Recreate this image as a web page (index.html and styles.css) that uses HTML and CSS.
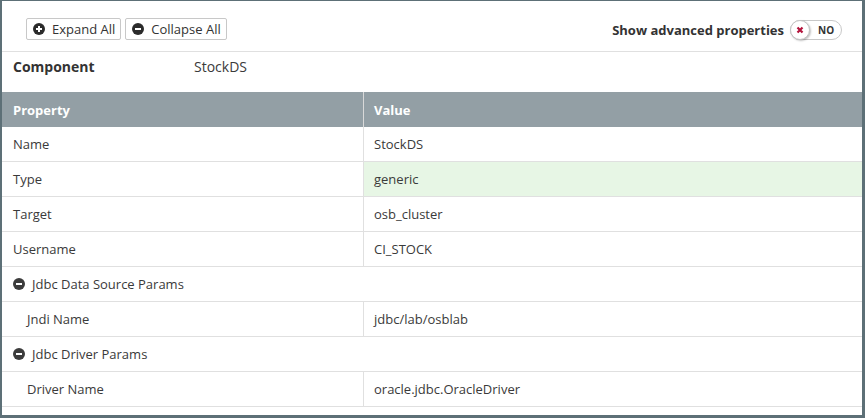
FILE: index.html
```html
<!DOCTYPE html>
<html>
<head>
<meta charset="utf-8">
<link rel="stylesheet" href="styles.css">
</head>
<body>
<div class="frame">
  <div class="toolbar">
    <div class="btns">
      <button class="btn"><svg class="ic" viewBox="0 0 12 12"><circle cx="6" cy="6" r="6" fill="#2b2b2b"/><path d="M6 3v6M3 6h6" stroke="#fff" stroke-width="2"/></svg>Expand All</button>
      <button class="btn"><svg class="ic" viewBox="0 0 12 12"><circle cx="6" cy="6" r="6" fill="#2b2b2b"/><path d="M3 6h6" stroke="#fff" stroke-width="2"/></svg>Collapse All</button>
    </div>
    <div class="adv">
      <span class="adv-label">Show advanced properties</span>
      <span class="toggle"><span class="knob"><svg viewBox="0 0 8 8" class="x"><path d="M1.5 1.5l5 5M6.5 1.5l-5 5" stroke="#b3133b" stroke-width="2.2"/></svg></span><span class="no">NO</span></span>
    </div>
  </div>
  <div class="component">
    <span class="comp-label">Component</span>
    <span class="comp-value">StockDS</span>
  </div>
  <table class="props">
    <thead>
      <tr><th class="c1">Property</th><th class="c2">Value</th></tr>
    </thead>
    <tbody>
      <tr><td class="c1">Name</td><td class="c2">StockDS</td></tr>
      <tr><td class="c1">Type</td><td class="c2 changed">generic</td></tr>
      <tr><td class="c1">Target</td><td class="c2">osb_cluster</td></tr>
      <tr><td class="c1">Username</td><td class="c2">CI_STOCK</td></tr>
      <tr class="group"><td colspan="2"><svg class="gic" viewBox="0 0 12 12"><circle cx="6" cy="6" r="6" fill="#3c3c3c"/><path d="M3 6h6" stroke="#fff" stroke-width="2"/></svg>Jdbc Data Source Params</td></tr>
      <tr><td class="c1 nested">Jndi Name</td><td class="c2">jdbc/lab/osblab</td></tr>
      <tr class="group"><td colspan="2"><svg class="gic" viewBox="0 0 12 12"><circle cx="6" cy="6" r="6" fill="#3c3c3c"/><path d="M3 6h6" stroke="#fff" stroke-width="2"/></svg>Jdbc Driver Params</td></tr>
      <tr><td class="c1 nested">Driver Name</td><td class="c2">oracle.jdbc.OracleDriver</td></tr>
    </tbody>
  </table>
</div>
</body>
</html>
```

FILE: styles.css
```css
html, body {
  margin: 0;
  padding: 0;
  background: #fff;
}
body {
  font-family: "Open Sans", "DejaVu Sans", sans-serif;
  font-size: 13px;
  color: #3a3a3a;
}
.frame {
  box-sizing: border-box;
  width: 865px;
  height: 418px;
  border-style: solid;
  border-color: #5d7077;
  border-width: 1px 3px 3px 2px;
  background: #fff;
  overflow: hidden;
}
.toolbar {
  box-sizing: border-box;
  border-bottom: 1px solid #e0e0e0;
  display: flex;
  justify-content: space-between;
  align-items: flex-start;
  padding: 17px 20px 0 24px;
  height: 51px;
}
.btns {
  display: flex;
  gap: 4px;
}
.btn {
  display: flex;
  align-items: center;
  height: 22px;
  box-sizing: border-box;
  padding: 0 5px 0 6px;
  border: 1px solid #c8c8c8;
  border-radius: 2px;
  background: #fff;
  font-family: "Open Sans", "DejaVu Sans", sans-serif;
  font-size: 13px;
  color: #333;
  cursor: pointer;
}
.ic {
  width: 12px;
  height: 12px;
  margin-right: 7px;
}
.adv {
  display: flex;
  align-items: center;
  gap: 6px;
  margin-top: 2px;
}
.adv-label {
  font-weight: 700;
  font-size: 13px;
  color: #333;
}
.toggle {
  display: flex;
  align-items: center;
  width: 52px;
  height: 20px;
  box-sizing: border-box;
  border: 1px solid #c8c8c8;
  border-radius: 10px;
  background: #fff;
}
.knob {
  display: flex;
  align-items: center;
  justify-content: center;
  width: 20px;
  height: 20px;
  margin-left: -1px;
  box-sizing: border-box;
  border-radius: 50%;
  background: #fff;
  border: 1px solid #c4c4c4;
  box-shadow: 1px 1px 2px rgba(0,0,0,0.25);
}
.x {
  width: 8px;
  height: 8px;
}
.no {
  margin-left: 8px;
  font-size: 10px;
  font-weight: 700;
  color: #333;
}
.component {
  display: flex;
  align-items: center;
  height: 40px;
  padding: 0 11px 11px;
  box-sizing: border-box;
}
.comp-label {
  width: 181px;
  font-weight: 700;
  font-size: 14px;
  color: #333;
}
.comp-value {
  font-size: 14px;
  color: #3a3a3a;
}
.props {
  width: 100%;
  border-collapse: collapse;
  table-layout: fixed;
}
.props th {
  background: #939fa5;
  color: #fff;
  font-weight: 700;
  text-align: left;
  height: 35px;
  padding: 0 10px;
  font-size: 13px;
}
.props th.c1, .props td.c1 {
  width: 340px;
  padding-left: 11px;
}
.props th.c2 {
  border-left: 1px solid #d9d9d9;
}
.props td {
  height: 34px;
  padding: 0 10px;
  border-bottom: 1px solid #e0e0e0;
  color: #3a3a3a;
}
.props td.c2 {
  border-left: 1px solid #e0e0e0;
}
.props td.changed {
  background: #e7f6e5;
}
.props td.nested {
  padding-left: 25px;
}
.group td {
  padding-left: 11px;
}
.gic {
  width: 12px;
  height: 12px;
  margin-right: 7px;
  vertical-align: -1px;
}
```
